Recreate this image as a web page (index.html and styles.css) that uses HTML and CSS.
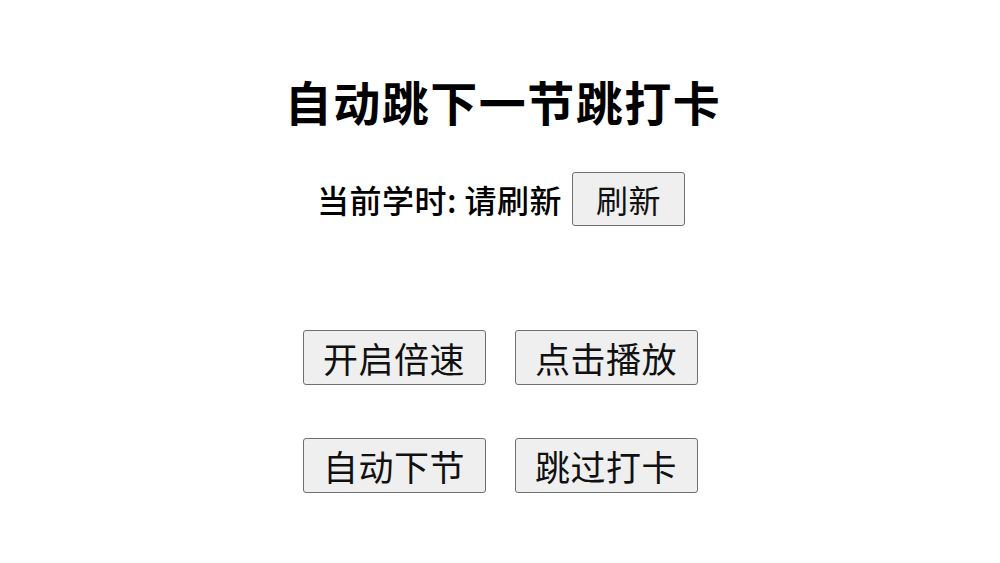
FILE: index.html
```html
<!DOCTYPE html>
<html lang="zh-CN">
<head>
<meta charset="utf-8">
<title>自动跳下一节跳打卡</title>
<link rel="stylesheet" href="styles.css">
</head>
<body>
<main class="panel">
  <h1 class="title">自动跳下一节跳打卡</h1>
  <div class="status">
    <span class="status-text">当前学时: 请刷新</span>
    <button class="btn btn-small">刷新</button>
  </div>
  <div class="grid">
    <button class="btn">开启倍速</button>
    <button class="btn">点击播放</button>
    <button class="btn">自动下节</button>
    <button class="btn">跳过打卡</button>
  </div>
</main>
</body>
</html>
```

FILE: styles.css
```css
html, body {
  margin: 0;
  padding: 0;
  background: #ffffff;
}
body {
  width: 1000px;
  height: 563px;
  overflow: hidden;
  font-family: "Noto Sans CJK SC", "Noto Sans", sans-serif;
  color: #000;
}
.panel {
  display: flex;
  flex-direction: column;
  align-items: center;
  padding-top: 70px;
}
.title {
  margin: 0;
  font-size: 47px;
  font-weight: 700;
  line-height: 62px;
  letter-spacing: 1.5px;
  padding-left: 6px;
}
.status {
  display: flex;
  align-items: center;
  gap: 10px;
  margin-top: 40px;
  padding-left: 2px;
}
.status-text {
  font-size: 32px;
  font-weight: 500;
  letter-spacing: 0.5px;
}
.btn {
  font-family: "Noto Sans CJK SC", "Noto Sans", sans-serif;
  font-size: 35px;
  line-height: 40px;
  letter-spacing: 0.5px;
  color: #111;
  background: #efefef;
  border: 1.5px solid #6f6f6f;
  border-radius: 3px;
  height: 55px;
  width: 183px;
  padding: 0;
  display: flex;
  align-items: center;
  justify-content: center;
}
.btn-small {
  width: 113px;
  height: 54px;
  font-size: 32px;
}
.grid {
  display: grid;
  grid-template-columns: 183px 183px;
  column-gap: 29px;
  row-gap: 53px;
  margin-top: 104px;
}
```
